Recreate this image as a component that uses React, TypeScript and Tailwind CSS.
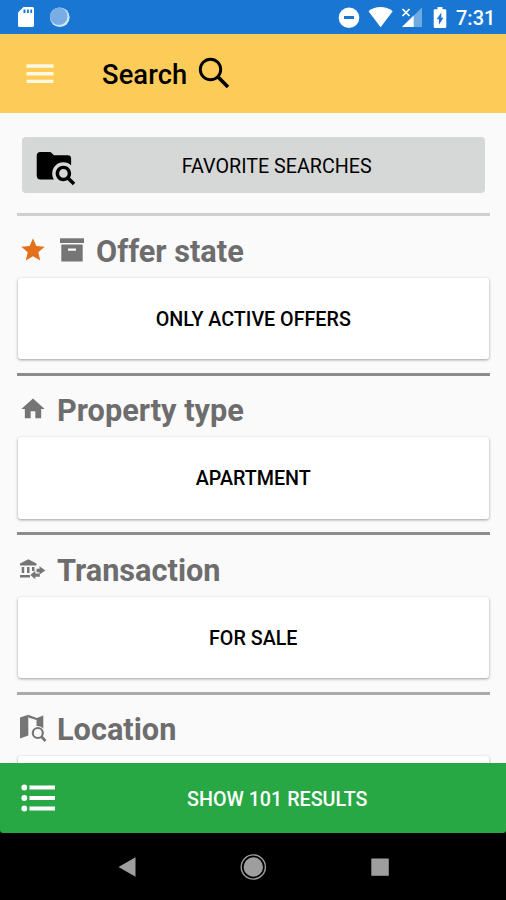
import type { ReactNode } from "react";

type GlyphProps = { w: number; h: number; box?: string; className?: string; children: ReactNode };

function Glyph({ w, h, box, className = "", children }: GlyphProps) {
  return (
    <svg width={w} height={h} viewBox={box ?? `0 0 ${w} ${h}`} fill="currentColor" className={`block shrink-0 ${className}`}>
      {children}
    </svg>
  );
}

function StatusBar() {
  return (
    <div className="flex h-[34px] shrink-0 items-start bg-[#1976d2] text-white">
      <Glyph w={90} h={34}>
        <path d="M23.5 7H32.5Q34 7 34 8.500V25.500Q34 27 32.500 27H19.500Q18 27 18 25.500V12.500Z" />
        <path d="M23.500 9.500h2v3.500h-2zM27 9.500h1.800v3.500H27zM30.300 9.500h1.800v3.500h-1.800z" fill="#1976d2" />
        <circle cx="59.800" cy="17.300" r="9.800" fill="#d5e8fa" />
        <circle cx="58.800" cy="16.300" r="8.800" fill="#79ade6" />
      </Glyph>
      <Glyph w={120} h={34} className="ml-auto">
        <circle cx="13" cy="17.700" r="10.300" />
        <path d="M8 16h10v3H8z" fill="#1976d2" />
        <path d="M32.500 11.200C39.500 5.600 49.500 5.600 56.700 11.200L44.600 27.300Z" />
        <path d="M86 7.500V27H66Z" opacity=".38" />
        <path d="M77.700 15.500V27H66Z" />
        <path d="M66.500 9l7 7M73.500 9l-7 7" stroke="white" strokeWidth="1.700" fill="none" />
        <path d="M101.500 7h5v2.200h2.700Q110.300 9.200 110.300 10.300V26.700Q110.300 28 109 28H99Q97.700 28 97.700 26.700V10.300Q97.700 9.200 98.800 9.200H101.500Z" />
        <path d="M105.300 12.500v5.200h2.200l-4.600 7v-5.500h-2.200z" fill="#1976d2" />
      </Glyph>
      <span className="mr-[10px] w-[40px] whitespace-nowrap text-[20px] leading-[37px] font-medium">7:31</span>
    </div>
  );
}

function Header() {
  return (
    <header className="flex h-[79px] shrink-0 items-center bg-[#fccb58] pl-[26px] text-black">
      <Glyph w={28} h={20} className="text-[#fff9e4]">
        <path d="M0.500 0.300h27v3.400h-27zM0.500 8h27v3.400h-27zM0.500 15.700h27v3.400h-27z" />
      </Glyph>
      <h1 className="mt-[2px] ml-[48px] w-[96px] text-[27.300px] leading-[32px] font-medium tracking-[0.1px]">Search</h1>
      <Glyph w={32} h={32} className="mt-[-1px]">
        <circle cx="12.500" cy="12.500" r="10.200" fill="none" stroke="currentColor" strokeWidth="2.900" />
        <path d="M19.800 19.800L30 30" stroke="currentColor" strokeWidth="3.600" />
      </Glyph>
    </header>
  );
}

const StarIcon = () => (
  <Glyph w={28} h={28} box="0 0 24 24" className="mr-[13px] text-[#e27119]">
    <path d="M12 17.270L18.180 21l-1.640-7.030L22 9.240l-7.190-.61L12 2 9.190 8.630 2 9.240l5.460 4.730L5.820 21z" />
  </Glyph>
);

const ArchiveIcon = () => (
  <Glyph w={24} h={24} className="mr-[2px] text-[#757575]">
    <path d="M0 .3h24v4.700H0z" />
    <path fillRule="evenodd" d="M1.300 6.500h21.400V23.500H1.300zM8 10.500v2.300h8v-2.300z" />
  </Glyph>
);

const HomeIcon = () => (
  <Glyph w={28} h={28} box="0 0 24 24" className="text-[#757575]">
    <path d="M10 20v-6h4v6h5v-8h3L12 3 2 12h3v8z" />
  </Glyph>
);

const BankTransferIcon = () => (
  <Glyph w={28} h={28} className="text-[#757575]">
    <path d="M9.300 4.200L17.500 8.500V10.500H1V8.500ZM2.700 12h2.500v6H2.700zM8 12h2.500v6H8zM13 12h2.500v4H13zM1 20h10v2.500H1z" />
    <path d="M20.500 11.200L26.300 15.400L20.500 19.600V17.200H17.500V13.800H20.500ZM16.300 15.800V18.500H20.800V21.700H16.300V24.300L11.300 20Z" />
  </Glyph>
);

const MapSearchIcon = () => (
  <Glyph w={28} h={30} className="text-[#757575]">
    <path d="M1 4.500L9.300 1.700V22.500L1 25.500Z" />
    <path d="M9.300 1.700L17.800 5L24.300 2.500V15.500Q21.500 12.500 17.500 13V7L9.300 4.500Z" />
    <circle cx="18.800" cy="20" r="5" fill="none" stroke="currentColor" strokeWidth="2.200" />
    <path d="M22.300 23.500L26.500 28" stroke="currentColor" strokeWidth="2.600" />
  </Glyph>
);

function Section({ icons, title, value, rule }: { icons: ReactNode; title: string; value: string; rule: string }) {
  return (
    <section className="flex h-[159.500px] shrink-0 flex-col">
      <div className={`h-[3px] shrink-0 ${rule}`} />
      <div className="flex h-[61.500px] shrink-0 items-center pt-[10px] pl-[2px]">
        <div className="flex h-[30px] items-center pb-[4px]">{icons}</div>
        <h2 className="ml-[10px] whitespace-nowrap text-[30.700px] leading-[36px] font-bold text-[#6d6d6d]">{title}</h2>
      </div>
      <button className="mr-px ml-[0.500px] h-[81.500px] shrink-0 rounded-[3px] bg-white pt-[3px] text-[19.700px] font-medium text-black shadow-[0_1px_3px_rgba(0,0,0,0.380)]">
        {value}
      </button>
    </section>
  );
}

export default function App() {
  return (
    <div className="flex h-[900px] w-[506px] flex-col overflow-hidden bg-[#fafafa] font-['Roboto',sans-serif]">
      <StatusBar />
      <Header />
      <main className="flex min-h-0 flex-1 flex-col overflow-hidden pt-[24px] pr-[16px] pl-[17px]">
        <button className="mx-[5px] mb-[20px] flex h-[56px] shrink-0 items-center rounded-[4px] bg-[#d6d8d7] pl-[12.500px] text-black">
          <Glyph w={41.3} h={41.3} box="0 0 24 24" className="mb-[-1px]">
            <path d="M16.500 12C19 12 21 14 21 16.500C21 17.380 20.750 18.210 20.310 18.900L23.390 22L22 23.390L18.880 20.320C18.190 20.750 17.370 21 16.500 21C14 21 12 19 12 16.500C12 14 14 12 16.500 12M16.500 14A2.500 2.500 0 0 0 14 16.500A2.500 2.500 0 0 0 16.500 19A2.500 2.500 0 0 0 19 16.500A2.500 2.500 0 0 0 16.500 14M9 4L11 6H19A2 2 0 0 1 21 8V11.810C19.830 10.690 18.250 10 16.500 10A6.500 6.500 0 0 0 10 16.500C10 17.790 10.370 19 11 20H3C1.890 20 1 19.100 1 18V6C1 4.890 1.890 4 3 4H9Z" />
          </Glyph>
          <span className="mt-[3px] ml-[106px] whitespace-nowrap text-[19.700px]">FAVORITE SEARCHES</span>
        </button>
        <Section icons={<><StarIcon /><ArchiveIcon /></>} title="Offer state" value="ONLY ACTIVE OFFERS" rule="bg-[#cfcfcf]" />
        <Section icons={<HomeIcon />} title="Property type" value="APARTMENT" rule="bg-[#8c8c8c]" />
        <Section icons={<BankTransferIcon />} title="Transaction" value="FOR SALE" rule="bg-[#8c8c8c]" />
        <Section icons={<MapSearchIcon />} title="Location" value="" rule="bg-[#aaaaaa]" />
      </main>
      <div className="shrink-0 bg-black">
        <button className="flex h-[70px] w-full items-center rounded-b-[3px] bg-[#28a745] pl-[21px] text-white">
          <Glyph w={35} h={30}>
            <circle cx="3.300" cy="4.500" r="2.900" />
            <circle cx="3.300" cy="15" r="2.900" />
            <circle cx="3.300" cy="25.500" r="2.900" />
            <path d="M8.500 2.500H34v4H8.500zM8.500 13H34v4H8.500zM8.500 23.500H34v4H8.500z" />
          </Glyph>
          <span className="mt-[3px] ml-[131px] whitespace-nowrap text-[19.700px] font-medium">SHOW 101 RESULTS</span>
        </button>
      </div>
      <nav className="flex h-[67px] shrink-0 items-center bg-black pl-[118px] text-[#9e9e9e]">
        <Glyph w={18} h={20}>
          <path d="M0.500 10L17.500 0.300V19.700Z" />
        </Glyph>
        <Glyph w={28} h={28} className="ml-[103px]">
          <circle cx="14.300" cy="14" r="12.100" fill="none" stroke="currentColor" strokeWidth="1.400" />
          <circle cx="14.300" cy="14" r="9.700" />
        </Glyph>
        <Glyph w={18} h={18} className="ml-[104px]">
          <path d="M0.300 0.500h17.500v17.300H0.300z" />
        </Glyph>
      </nav>
    </div>
  );
}
